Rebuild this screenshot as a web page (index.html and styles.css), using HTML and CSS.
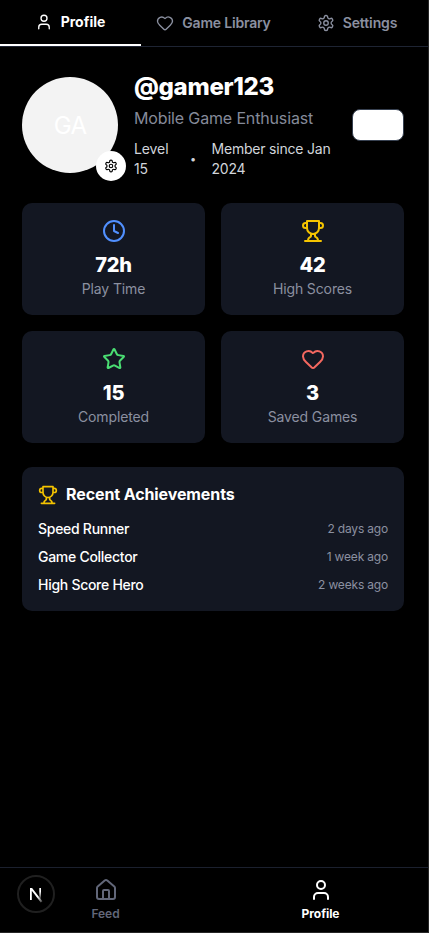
FILE: index.html
```html
<!DOCTYPE html>
<html lang="en">
<head>
<meta charset="utf-8">
<meta name="viewport" content="width=device-width, initial-scale=1">
<title>Profile</title>
<link rel="stylesheet" href="styles.css">
</head>
<body>
<svg class="sprite" aria-hidden="true">
  <symbol id="user" viewBox="0 0 24 24"><path d="M19 21v-2a4 4 0 0 0-4-4H9a4 4 0 0 0-4 4v2"/><circle cx="12" cy="7" r="4"/></symbol>
  <symbol id="heart" viewBox="0 0 24 24"><path d="M2 9.500a5.500 5.500 0 0 1 9.591-3.676.56.56 0 0 0 .818 0A5.490 5.490 0 0 1 22 9.500c0 2.290-1.500 4-3 5.500l-5.492 5.313a2 2 0 0 1-3 .019L5 15c-1.500-1.500-3-3.200-3-5.500"/></symbol>
  <symbol id="gear" viewBox="0 0 24 24"><path d="M12.220 2h-.44a2 2 0 0 0-2 2v.18a2 2 0 0 1-1 1.730l-.43.25a2 2 0 0 1-2 0l-.15-.08a2 2 0 0 0-2.730.73l-.22.38a2 2 0 0 0 .73 2.730l.15.1a2 2 0 0 1 1 1.720v.51a2 2 0 0 1-1 1.740l-.15.09a2 2 0 0 0-.73 2.730l.22.38a2 2 0 0 0 2.730.73l.15-.08a2 2 0 0 1 2 0l.43.25a2 2 0 0 1 1 1.730V20a2 2 0 0 0 2 2h.44a2 2 0 0 0 2-2v-.18a2 2 0 0 1 1-1.730l.43-.25a2 2 0 0 1 2 0l.15.08a2 2 0 0 0 2.730-.73l.22-.39a2 2 0 0 0-.73-2.730l-.15-.08a2 2 0 0 1-1-1.740v-.5a2 2 0 0 1 1-1.740l.15-.09a2 2 0 0 0 .73-2.730l-.22-.38a2 2 0 0 0-2.730-.73l-.15.08a2 2 0 0 1-2 0l-.43-.25a2 2 0 0 1-1-1.730V4a2 2 0 0 0-2-2z"/><circle cx="12" cy="12" r="3"/></symbol>
  <symbol id="clock" viewBox="0 0 24 24"><circle cx="12" cy="12" r="10"/><path d="M12 6v6l4 2"/></symbol>
  <symbol id="trophy" viewBox="0 0 24 24"><path d="M6 9H4.500a2.500 2.500 0 0 1 0-5H6M18 9h1.500a2.500 2.500 0 0 0 0-5H18M4 22h16M10 14.660V17c0 .55-.47.98-.97 1.210C7.850 18.750 7 20.240 7 22M14 14.660V17c0 .55.47.98.97 1.210C16.150 18.750 17 20.240 17 22M18 2H6v7a6 6 0 0 0 12 0V2Z"/></symbol>
  <symbol id="star" viewBox="0 0 24 24"><path d="M11.525 2.295a.53.53 0 0 1 .95 0l2.310 4.679a2.123 2.123 0 0 0 1.595 1.160l5.166.756a.53.53 0 0 1 .294.904l-3.736 3.638a2.123 2.123 0 0 0-.611 1.878l.882 5.140a.53.53 0 0 1-.771.560l-4.618-2.428a2.122 2.122 0 0 0-1.973 0L6.396 21.010a.53.53 0 0 1-.770-.560l.881-5.139a2.122 2.122 0 0 0-.611-1.879L2.160 9.795a.53.53 0 0 1 .294-.906l5.165-.755a2.122 2.122 0 0 0 1.597-1.160z"/></symbol>
  <symbol id="house" viewBox="0 0 24 24"><path d="M15 21v-8a1 1 0 0 0-1-1h-4a1 1 0 0 0-1 1v8M3 10a2 2 0 0 1 .709-1.528l7-5.999a2 2 0 0 1 2.582 0l7 5.999A2 2 0 0 1 21 10v9a2 2 0 0 1-2 2H5a2 2 0 0 1-2-2z"/></symbol>
</svg>
<div class="app">
  <nav class="tabs">
    <a class="tab active"><svg class="icon"><use href="#user"/></svg><span class="tab-profile">Profile</span></a>
    <a class="tab"><svg class="icon"><use href="#heart"/></svg><span class="tab-library">Game Library</span></a>
    <a class="tab"><svg class="icon"><use href="#gear"/></svg><span class="tab-settings">Settings</span></a>
  </nav>
  <main class="content">
    <header class="profile">
      <div class="avatar">GA<button class="avatar-edit" aria-label="Edit avatar"><svg class="icon"><use href="#gear"/></svg></button></div>
      <div class="info">
        <h1 class="handle">@gamer123</h1>
        <p class="bio">Mobile Game Enthusiast</p>
        <div class="meta"><span class="level">Level<br>15</span><span class="dot">•</span><span class="since">Member since Jan<br>2024</span></div>
      </div>
      <button class="edit" aria-label="Edit"></button>
    </header>
    <section class="stats">
      <div class="stat"><svg class="icon blue"><use href="#clock"/></svg><strong>72h</strong><span>Play Time</span></div>
      <div class="stat"><svg class="icon yellow"><use href="#trophy"/></svg><strong>42</strong><span>High Scores</span></div>
      <div class="stat"><svg class="icon green"><use href="#star"/></svg><strong>15</strong><span>Completed</span></div>
      <div class="stat"><svg class="icon red"><use href="#heart"/></svg><strong>3</strong><span>Saved Games</span></div>
    </section>
    <section class="achievements">
      <h2><svg class="icon yellow"><use href="#trophy"/></svg><span>Recent Achievements</span></h2>
      <ul>
        <li><span>Speed Runner</span><time>2 days ago</time></li>
        <li><span>Game Collector</span><time>1 week ago</time></li>
        <li><span>High Score Hero</span><time>2 weeks ago</time></li>
      </ul>
    </section>
  </main>
  <nav class="bottom">
    <a class="nav-item"><svg class="icon"><use href="#house"/></svg><span>Feed</span></a>
    <a class="nav-item current"><svg class="icon"><use href="#user"/></svg><span>Profile</span></a>
    <div class="badge"><svg viewBox="0 0 38 38"><defs><linearGradient id="fade" x1="0" y1="0" x2="0" y2="1"><stop offset=".3" stop-color="#fff"/><stop offset="1" stop-color="#fff" stop-opacity="0"/></linearGradient><linearGradient id="tail" x1="0" y1="0" x2="1" y2="1"><stop offset=".6" stop-color="#fff"/><stop offset="1" stop-color="#fff" stop-opacity=".2"/></linearGradient></defs><path fill="url(#tail)" d="M13 13h2.100l10.300 13.200-1.600 1.200L14.800 15.800V25H13z"/><path fill="url(#fade)" d="M22.300 13H24v12h-1.700z"/></svg></div>
  </nav>
</div>
</body>
</html>
```
FILE: styles.css
```css
* { box-sizing: border-box; }
body { margin: 0; background: #000; color: #fff; font-family: Inter, "Liberation Sans", sans-serif; }
h1, h2, p, ul { margin: 0; padding: 0; }
button { padding: 0; font: inherit; }
.sprite { display: none; }
.icon { display: block; flex: none; width: 24px; height: 24px; fill: none; stroke: currentColor; stroke-width: 2; stroke-linecap: round; stroke-linejoin: round; }
.app { height: 933px; display: flex; flex-direction: column; border-right: 1px solid #262626; border-bottom: 1px solid #262626; }

.tabs { display: grid; grid-template-columns: 141px 145px 1fr; height: 47px; border-bottom: 1px solid #1e2433; }
.tab { display: flex; align-items: center; justify-content: center; gap: 8px; color: #8b90a0; font-size: 14px; font-weight: 600; line-height: 20px; white-space: nowrap; }
.tab .icon { width: 18px; height: 18px; stroke-width: 1.8; }
.tab.active { color: #fff; border-bottom: 2px solid #fff; }
.tab.active { padding-right: 1px; }
.tab-profile { letter-spacing: 0; font-weight: 700; }
.tab-library { letter-spacing: -0.2px; }
.tab-settings { letter-spacing: -0.1px; }

.content { flex: 1; padding: 24px 24px 0 22px; }
.profile { display: flex; align-items: center; height: 108px; }
.avatar { position: relative; display: flex; align-items: center; justify-content: center; flex: none; width: 96px; height: 96px; border-radius: 50%; background: #f3f3f3; color: #fff; font-size: 24px; letter-spacing: -0.8px; }
.avatar-edit { position: absolute; right: -8px; bottom: -8px; display: flex; align-items: center; justify-content: center; width: 30px; height: 30px; border: 0; border-radius: 50%; background: #fff; color: #000; }
.avatar-edit .icon { width: 14px; height: 14px; }
.info { flex: 1; margin-left: 16px; white-space: nowrap; }
.handle { font-size: 24px; line-height: 32px; font-weight: 800; letter-spacing: -0.3px; }
.bio { color: #858a99; font-size: 16px; line-height: 24px; margin-top: 3px; letter-spacing: -0.15px; }
.meta { display: flex; align-items: center; margin-top: 9px; color: #d1d5db; font-size: 14px; line-height: 20px; }
.level { width: 56px; letter-spacing: -0.1px; }
.dot { width: 21px; font-size: 11px; }
.since { margin-left: 0.5px; letter-spacing: -0.2px; }
.edit { flex: none; width: 52px; height: 32px; border: 1px solid #374151; border-radius: 8px; background: #fff; }

.stats { display: grid; grid-template-columns: 1fr 1fr; gap: 16px; margin-top: 24px; }
.stat { display: flex; flex-direction: column; align-items: center; height: 112px; padding-top: 16px; border-radius: 10px; background: #131722; }
.stat strong { margin-top: 8px; font-size: 20px; line-height: 28px; font-weight: 800; letter-spacing: -0.2px; }
.stat span { color: #8b90a0; font-size: 14px; line-height: 20px; letter-spacing: -0.12px; }
.blue { color: #5190ff; }
.yellow { color: #f5c400; }
.green { color: #4ade73; }
.red { color: #f46860; }

.achievements { height: 144px; margin-top: 24px; padding: 16px; border-radius: 10px; background: #131722; }
.achievements h2 { display: flex; align-items: center; gap: 8px; height: 24px; font-size: 16px; font-weight: 700; letter-spacing: -0.1px; }
.achievements h2 span { margin-top: -2px; }
.achievements h2 .icon { width: 20px; height: 20px; }
.achievements ul { display: grid; gap: 8px; margin-top: 12px; list-style: none; }
.achievements li { display: flex; align-items: center; justify-content: space-between; font-size: 14px; line-height: 20px; font-weight: 500; letter-spacing: -0.28px; }
.achievements time { color: #8b90a0; font-size: 12px; font-weight: 400; letter-spacing: -0.18px; }

.bottom { position: relative; display: grid; grid-template-columns: 211px 1fr; height: 65px; border-top: 1px solid #1b202e; }
.nav-item { display: flex; flex-direction: column; align-items: center; padding-top: 10px; color: #626779; font-size: 12px; line-height: 16px; font-weight: 600; letter-spacing: -0.05px; }
.nav-item span { margin-top: 4px; }
.nav-item.current { color: #fff; padding-left: 2px; }
.nav-item.current span { font-weight: 700; }
.badge { position: absolute; left: 17px; top: 7px; width: 38px; height: 38px; border: 2px solid #202020; border-radius: 50%; }
.badge svg { display: block; width: 38px; height: 38px; margin: -2px; }
```
